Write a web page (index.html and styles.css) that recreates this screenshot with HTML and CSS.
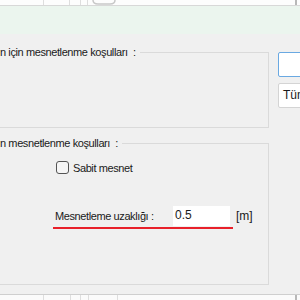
FILE: index.html
```
<!DOCTYPE html>
<html lang="tr">

<head>
    <meta charset="UTF-8">
    <meta name="viewport" content="width=device-width, initial-scale=1.0">
    <title>Mesnetlenme</title>
    <link rel="stylesheet" href="styles.css">
</head>

<body>
    <div class="grid-top">
        <div class="cell w43"></div>
        <div class="cell w26"></div>
        <div class="cell w11"></div>
        <div class="cell w7"></div>
        <div class="cell grow">
            <svg class="knob" width="24" height="6" viewBox="0 0 24 6">
                <path d="M1 -6 L1 0 Q1 4 6 4 L18 4 Q23 4 23 0 L23 -6" fill="none" stroke="#c8c8c8" stroke-width="1.5" />
            </svg>
        </div>
        <div class="cell edge"></div>
    </div>
    <div class="band"></div>

    <div class="main">
        <div class="left">
            <div class="group g1">
                <div class="group-title">
                    <span class="title-text">n için mesnetlenme koşulları&nbsp;&nbsp;:</span>
                    <span class="rule"></span>
                </div>
            </div>

            <div class="group g2">
                <div class="group-title">
                    <span class="title-text">n mesnetlenme koşulları&nbsp;&nbsp;:</span>
                    <span class="rule"></span>
                </div>
                <label class="check-row">
                    <span class="box"></span>
                    <span>Sabit mesnet</span>
                </label>
                <div class="dist-row">
                    <span class="dist-label">Mesnetleme uzaklığı :</span>
                    <span class="dist-input">0.5</span>
                    <span class="unit">[m]</span>
                </div>
                <div class="red-mark"></div>
            </div>
        </div>

        <div class="right">
            <div class="btn focus"></div>
            <div class="btn">Tüm</div>
        </div>
    </div>

    <div class="grid-bottom">
        <div class="cell w43"></div>
        <div class="cell w27"></div>
        <div class="cell w10"></div>
        <div class="cell w8"></div>
        <div class="cell w29"></div>
        <div class="cell grow"><span class="cut-text">ayarlar</span></div>
        <div class="cell edge"></div>
    </div>
</body>

</html>
```

FILE: styles.css
```
body {
    margin: 0;
    width: 300px;
    height: 300px;
    overflow: hidden;
    background-color: #f0f0f0;
    font-family: "Liberation Sans", Arial, sans-serif;
    font-size: 11px;
    letter-spacing: -0.4px;
    color: #1a1a1a;
}

/* strips of a table above and below */
.grid-top {
    display: flex;
    height: 5px;
    background-color: #fdfdfd;
    border-bottom: 1px solid #d8d8d8;
}

.grid-bottom {
    display: flex;
    height: 5px;
    background-color: #fbfbfb;
    border-top: 1px solid #cfcfcf;
    overflow: hidden;
}

.cell {
    box-sizing: border-box;
    flex-shrink: 0;
    border-right: 1px solid #dedede;
    height: 100%;
}

.w43 { width: 44px; }
.w26 { width: 26px; }
.w27 { width: 27px; }
.w11 { width: 11px; }
.w10 { width: 10px; }
.w7 { width: 7px; }
.w8 { width: 8px; }
.w29 { width: 29px; }

.grow {
    flex: 1;
    border-right: 2px solid #b8b8b8;
}

.edge {
    width: 3px;
    border-right: none;
}

.knob {
    display: block;
    margin-left: 4px;
}

.cut-text {
    display: block;
    margin: 2px 0 0 15px;
    font-size: 15px;
    letter-spacing: 0;
    color: #9a9a9a;
}

.band {
    height: 28px;
    background-color: #ebf5ee;
}

.main {
    display: flex;
    height: 249px;
    padding-top: 11px;
}

.left {
    flex-shrink: 0;
    width: 269px;
}

.group {
    display: flow-root;
    border-right: 1px solid #dadada;
    border-bottom: 1px solid #dadada;
}

.g1 {
    margin-top: 7px;
    height: 76px;
    box-sizing: border-box;
}

.g2 {
    margin-top: 15px;
    padding-bottom: 55px;
}

.group-title {
    display: flex;
    align-items: center;
    height: 14px;
    margin-top: -7px;
}

.title-text {
    white-space: nowrap;
    padding-right: 4px;
}

.rule {
    flex: 1;
    height: 1px;
    background-color: #dadada;
}

.check-row {
    display: flex;
    align-items: center;
    gap: 4px;
    margin: 11px 0 0 56px;
    height: 13px;
}

.box {
    box-sizing: border-box;
    width: 13px;
    height: 13px;
    border: 1px solid #555;
    border-radius: 3px;
    background-color: #f6f6f6;
}

.dist-row {
    display: flex;
    align-items: center;
    margin: 32px 0 0 55px;
    height: 20px;
}

.dist-label {
    width: 118px;
}

.dist-input {
    box-sizing: border-box;
    width: 57px;
    height: 20px;
    padding: 2px 0 0 2px;
    background-color: #fff;
    font-size: 12px;
    letter-spacing: 0;
    align-self: flex-start;
}

.unit {
    margin-left: 6px;
    font-size: 12px;
    letter-spacing: 0;
}

.red-mark {
    margin: 1px 0 0 53px;
    width: 180px;
    height: 2px;
    background-color: #e8202a;
}

.right {
    flex-shrink: 0;
    margin-left: 9px;
}

.btn {
    box-sizing: border-box;
    width: 40px;
    height: 25px;
    margin-top: 6px;
    padding: 4px 0 0 4px;
    background-color: #fff;
    border: 1px solid #d4d4d4;
    border-radius: 2px;
    font-size: 12px;
    letter-spacing: 0;
}

.btn.focus {
    margin-top: 7px;
    border-color: #6aa9e2;
}
```
